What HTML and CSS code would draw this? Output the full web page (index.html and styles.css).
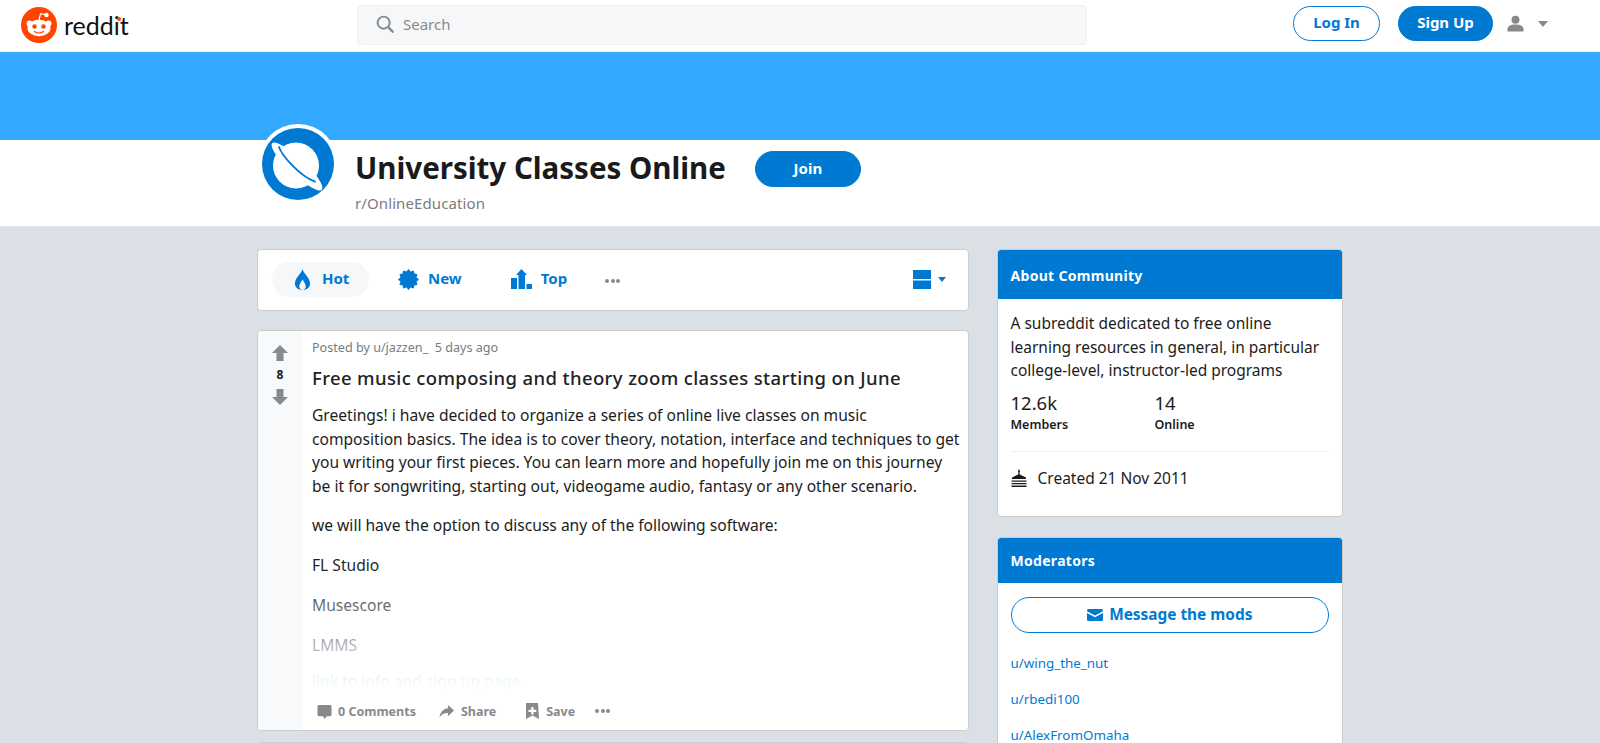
FILE: index.html
```html
<!DOCTYPE html>
<html lang="en">
<head>
  <meta charset="UTF-8">
  <title>University Classes Online</title>
  <link rel="stylesheet" href="styles.css">
</head>
<body>
  <header class="topbar">
    <a class="logo">
      <svg class="logo-icon" viewBox="0 0 36 36">
        <circle cx="18" cy="18" r="18" fill="#ff4500"/>
        <path d="M18 13l1.6-6.4 4.6 1" fill="none" stroke="#fff" stroke-width="1.2"/>
        <circle cx="25.5" cy="8" r="2.2" fill="#fff"/>
        <circle cx="8.5" cy="16.5" r="3" fill="#fff"/>
        <circle cx="27.5" cy="16.5" r="3" fill="#fff"/>
        <ellipse cx="18" cy="21" rx="11.5" ry="8.2" fill="#fff"/>
        <circle cx="13.5" cy="19.5" r="2.2" fill="#ff4500"/>
        <circle cx="22.5" cy="19.5" r="2.2" fill="#ff4500"/>
        <path d="M13.5 24.5c2.5 2 6.5 2 9 0" fill="none" stroke="#ff4500" stroke-width="1.2" stroke-linecap="round"/>
      </svg>
      <span class="logo-text">reddit<i class="logo-dot"></i></span>
    </a>
    <div class="search">
      <svg class="search-icon" viewBox="0 0 20 20">
        <circle cx="8.5" cy="8.5" r="6.7" fill="none" stroke="#878a8c" stroke-width="2.2"/>
        <path d="M13.5 13.5l5 5" stroke="#878a8c" stroke-width="2.6" stroke-linecap="round"/>
      </svg>
      <span>Search</span>
    </div>
    <div class="auth">
      <button class="btn btn-outline btn-login">Log In</button>
      <button class="btn btn-solid btn-signup">Sign Up</button>
      <svg class="user-icon" viewBox="0 0 18 18">
        <circle cx="9" cy="5" r="4.2" fill="#878a8c"/>
        <path d="M0.5 17.5V15c0-3 3-5 8.5-5s8.5 2 8.5 5v2.5z" fill="#878a8c"/>
      </svg>
      <span class="caret caret-grey"></span>
    </div>
  </header>

  <div class="banner"></div>

  <section class="sub-head">
    <div class="sub-head-inner">
      <svg class="sub-icon" viewBox="0 0 80 80">
        <circle cx="40" cy="40" r="40" fill="#fff"/>
        <circle cx="40" cy="40" r="36" fill="#0079d3"/>
        <circle cx="38" cy="41.5" r="23" fill="#fff"/>
        <ellipse cx="39" cy="42.5" rx="34" ry="8" transform="rotate(43 39 42.5)" fill="#fff"/>
        <path d="M21 23C24 32 42 52 57 57.7" fill="none" stroke="#0079d3" stroke-width="1.8" stroke-linecap="round"/>
      </svg>
      <div class="sub-names">
        <div class="sub-title-row">
          <h1 class="sub-title">University Classes Online</h1>
          <button class="btn btn-solid btn-join">Join</button>
        </div>
        <div class="sub-slug">r/OnlineEducation</div>
      </div>
    </div>
  </section>

  <main class="content">
    <div class="feed">
      <div class="sort-bar">
        <a class="sort-item sort-active">
          <svg class="sort-icon" viewBox="0 0 18 22"><path fill-rule="evenodd" d="M9 0C10 5 17 9 17 15.5 17 19.5 13.5 22 9 22S1 19.5 1 15.5C1 9 8 5 9 0zM9 11C7 14 5.5 16.5 5.5 18.5 5.5 20 7 22 9 22s3.5-2 3.5-3.5C12.5 16.5 11 14 9 11z" fill="#0079d3"/></svg>
          <span>Hot</span>
        </a>
        <a class="sort-item sort-new">
          <svg class="sort-icon sort-icon-new" viewBox="0 0 24 24"><path d="M12 0L14.46 2.82 18 1.6 18.72 5.28 22.39 6 21.18 9.54 24 12 21.18 14.46 22.39 18 18.72 18.72 18 22.39 14.46 21.18 12 24 9.54 21.18 6 22.39 5.28 18.72 1.61 18 2.82 14.46 0 12 2.82 9.54 1.61 6 5.28 5.28 6 1.61 9.54 2.82z" fill="#0079d3"/></svg>
          <span>New</span>
        </a>
        <a class="sort-item sort-top">
          <svg class="sort-icon sort-icon-top" viewBox="0 0 21 20"><path d="M0 9h6v11H0zM7.5 6H5l5.5-6L16 6h-2v14H7.5zM15.5 15H21v5h-5.5z" fill="#0079d3"/></svg>
          <span>Top</span>
        </a>
        <span class="dots sort-dots"><i></i><i></i><i></i></span>
        <div class="view-switch">
          <svg class="view-icon" viewBox="0 0 18 19"><path d="M0 0h18v9H0zM0 10.5h18V19H0z" fill="#0079d3"/></svg>
          <span class="caret caret-blue"></span>
        </div>
      </div>

      <article class="post">
        <div class="votes">
          <svg class="vote-arrow" viewBox="0 0 16 16"><path d="M8 0l8 8h-4.5v8h-7V8H0z" fill="#878a8c"/></svg>
          <span class="vote-count">8</span>
          <svg class="vote-arrow" viewBox="0 0 16 16"><path d="M8 16L0 8h4.5V0h7v8H16z" fill="#878a8c"/></svg>
        </div>
        <div class="post-main">
          <div class="post-meta">Posted by u/jazzen_ &nbsp;5 days ago</div>
          <h2 class="post-title">Free music composing and theory zoom classes starting on June</h2>
          <div class="post-body">
            <p>Greetings! i have decided to organize a series of online live classes on music<br>composition basics. The idea is to cover theory, notation, interface and techniques to get<br>you writing your first pieces. You can learn more and hopefully join me on this journey<br>be it for songwriting, starting out, videogame audio, fantasy or any other scenario.</p>
            <p>we will have the option to discuss any of the following software:</p>
            <p>FL Studio</p>
            <p>Musescore</p>
            <p>LMMS</p>
            <p class="post-link">link to info and sign up page</p>
          </div>
          <div class="post-actions">
            <a class="action action-comments">
              <svg class="action-icon" viewBox="0 0 16 16"><path d="M2 1h12a1.5 1.5 0 0 1 1.5 1.5v9A1.5 1.5 0 0 1 14 13h-3.5L8 16l-1.5-3H2a1.5 1.5 0 0 1-1.5-1.5v-9A1.5 1.5 0 0 1 2 1z" fill="#878a8c"/></svg>
              0 Comments
            </a>
            <a class="action action-share">
              <svg class="action-icon" viewBox="0 0 16 16"><path d="M9.5 1L16 7l-6.5 6V9.5C5 9.5 2.5 11 .5 15 1 9.5 4 5 9.5 4.5z" fill="#878a8c"/></svg>
              Share
            </a>
            <a class="action action-save">
              <svg class="action-icon action-icon-save" viewBox="0 0 13 16"><path fill-rule="evenodd" d="M0 0h12l1 16-6.5-3.5L0 16zM5.3 4v2.7H2.5v2.2h2.8v2.7h2.2V8.9h2.8V6.7H7.5V4z" fill="#878a8c"/></svg>
              Save
            </a>
            <span class="dots action-dots"><i></i><i></i><i></i></span>
          </div>
        </div>
      </article>

      <div class="post-next"></div>
    </div>

    <aside class="sidebar">
      <section class="card">
        <h3 class="card-head">About Community</h3>
        <div class="card-body about-body">
          <p class="about-text">A subreddit dedicated to free online learning resources in general, in particular college-level, instructor-led programs</p>
          <div class="stats">
            <div class="stat">
              <div class="stat-num">12.6k</div>
              <div class="stat-label">Members</div>
            </div>
            <div class="stat">
              <div class="stat-num">14</div>
              <div class="stat-label">Online</div>
            </div>
          </div>
          <div class="created">
            <svg class="cake-icon" viewBox="0 0 16 18">
              <path d="M8 0l1 2.2c0 .7-.4 1.1-1 1.1s-1-.4-1-1.1z" fill="#1c1c1c"/>
              <path d="M7.3 3.3h1.4v2H7.3z" fill="#1c1c1c"/>
              <path d="M8 5l7 3.5V10H1V8.5zM.5 11.5h15v1.2H.5zM.5 14h15v1.2H.5zM.5 16.5h15V18H.5z" fill="#1c1c1c"/>
            </svg>
            Created 21 Nov 2011
          </div>
        </div>
      </section>

      <section class="card">
        <h3 class="card-head card-head-mods">Moderators</h3>
        <div class="card-body mods-body">
          <button class="btn btn-outline btn-message">
            <svg class="mail-icon" viewBox="0 0 16 12"><path d="M1.5 0h13A1.5 1.5 0 0 1 16 1.5v.7L8 6.5 0 2.2v-.7A1.5 1.5 0 0 1 1.5 0zM0 4l8 4.3L16 4v6.5a1.5 1.5 0 0 1-1.5 1.5h-13A1.5 1.5 0 0 1 0 10.5z" fill="#0079d3"/></svg>
            Message the mods
          </button>
          <ul class="mods">
            <li>u/wing_the_nut</li>
            <li>u/rbedi100</li>
            <li>u/AlexFromOmaha</li>
          </ul>
        </div>
      </section>
    </aside>
  </main>
</body>
</html>
```

FILE: styles.css
```css
* {
  box-sizing: border-box;
}
html,
body {
  height: 743px;
  overflow: hidden;
}
body {
  margin: 0;
  background: #dae0e6;
  color: #1c1c1c;
  font-family: "Noto Sans", sans-serif;
}
h1, h2, h3, p, ul {
  margin: 0;
  padding: 0;
}

.topbar {
  display: flex;
  align-items: center;
  height: 52px;
  padding: 0 20px 2px 21px;
  background: white;
  border-bottom: 1px solid #edeff1;
}
.logo {
  display: flex;
  align-items: center;
  gap: 7px;
  width: 336px;
}
.logo-icon {
  width: 36px;
  height: 36px;
}
.logo-text {
  position: relative;
  font-family: "Lato", sans-serif;
  font-size: 25px;
  color: #111;
}
.logo-dot {
  position: absolute;
  right: 8px;
  top: 7px;
  width: 4px;
  height: 4px;
  border-radius: 50%;
  background: #ff4500;
}
.search {
  display: flex;
  align-items: center;
  gap: 9px;
  width: 730px;
  height: 40px;
  padding: 0 0 2px 18px;
  background: #f6f7f8;
  border: 1px solid #edeff1;
  border-radius: 4px;
  color: #878a8c;
  font-size: 15px;
}
.search-icon {
  width: 18px;
  height: 18px;
}
.auth {
  display: flex;
  align-items: center;
  margin-left: auto;
  margin-bottom: 2px;
}
.user-icon {
  width: 17px;
  height: 17px;
  margin: 0 14px 0 14px;
}

.btn {
  display: inline-flex;
  align-items: center;
  justify-content: center;
  border-radius: 18px;
  font-family: inherit;
  font-size: 14px;
  font-weight: 700;
  padding: 0 0 3px;
}
.btn-solid {
  background: #0079d3;
  color: white;
  border: 1px solid #0079d3;
}
.btn-outline {
  background: white;
  color: #0079d3;
  border: 1px solid #0079d3;
}
.btn-login {
  width: 87px;
  height: 35px;
  margin-right: 18px;
  font-size: 15px;
}
.btn-signup {
  width: 95px;
  height: 35px;
  font-size: 15px;
}
.btn-join {
  width: 106px;
  height: 36px;
  margin: 2px 0 0 29px;
  padding-bottom: 2px;
  font-size: 15px;
}
.btn-message {
  gap: 6px;
  width: 100%;
  height: 36px;
  padding-bottom: 1px;
  font-size: 15.4px;
}

.caret {
  width: 0;
  height: 0;
  border-left: 5px solid transparent;
  border-right: 5px solid transparent;
}
.caret-grey {
  border-top: 6px solid #878a8c;
  margin-right: 32px;
}
.caret-blue {
  border-left-width: 4px;
  border-right-width: 4px;
  border-top: 5px solid #0079d3;
}

.banner {
  height: 88px;
  background: #33a8ff;
}
.sub-head {
  height: 87px;
  background: white;
  border-bottom: 1px solid #e4e8ec;
}
.sub-head-inner {
  display: flex;
  gap: 17px;
  padding-left: 258px;
}
.sub-icon {
  width: 80px;
  height: 80px;
  margin-top: -16px;
}
.sub-names {
  padding-top: 9px;
}
.sub-title-row {
  display: flex;
  align-items: center;
  height: 38px;
}
.sub-title {
  font-size: 29.5px;
  font-weight: 700;
  line-height: 38px;
  color: #1a1a1b;
}
.sub-slug {
  margin-top: 7px;
  font-size: 15px;
  letter-spacing: 0.1px;
  line-height: 18px;
  color: #7c7c7c;
}

.content {
  display: flex;
  align-items: flex-start;
  gap: 28px;
  padding: 22px 0 0 257px;
}
.feed {
  width: 712px;
}
.sort-bar {
  display: flex;
  align-items: center;
  height: 62px;
  padding: 0 22px 2px 14px;
  background: white;
  border: 1px solid #ccc;
  border-radius: 4px;
}
.sort-item {
  display: flex;
  align-items: center;
  color: #0079d3;
  font-size: 15px;
  font-weight: 700;
}
.sort-item span {
  padding-bottom: 3px;
}
.sort-active {
  gap: 11px;
  width: 97px;
  height: 35px;
  margin-top: 1px;
  padding-left: 22px;
  background: #f6f7f8;
  border-radius: 18px;
}
.sort-new {
  gap: 9px;
  margin-left: 29px;
}
.sort-top {
  gap: 9px;
  margin-left: 49px;
}
.sort-icon {
  width: 17px;
  height: 21px;
}
.sort-icon-new {
  width: 21px;
  height: 21px;
}
.sort-icon-top {
  width: 21px;
  height: 20px;
}
.dots {
  display: inline-flex;
  gap: 1.5px;
}
.dots i {
  width: 4px;
  height: 4px;
  border-radius: 50%;
  background: #878a8c;
}
.sort-dots {
  margin: 4px 0 0 38px;
}
.view-switch {
  display: flex;
  align-items: center;
  gap: 7px;
  margin-left: auto;
}
.view-icon {
  width: 18px;
  height: 19px;
}

.post {
  display: flex;
  height: 401px;
  margin-top: 19px;
  overflow: hidden;
  background: white;
  border: 1px solid #ccc;
  border-radius: 4px;
}
.votes {
  display: flex;
  flex-direction: column;
  align-items: center;
  width: 44px;
  padding-top: 14px;
  background: #f8f9fa;
}
.vote-arrow {
  width: 16px;
  height: 16px;
}
.vote-count {
  margin: 5px 0;
  font-size: 12px;
  font-weight: 700;
  line-height: 18px;
}
.post-main {
  flex: 1;
  padding: 9px 8px 0 10px;
}
.post-meta {
  font-size: 12.6px;
  line-height: 16px;
  color: #787c7e;
}
.post-title {
  margin-top: 10px;
  font-size: 18.5px;
  font-weight: 500;
  letter-spacing: 0.37px;
  line-height: 24px;
  color: #222;
}
.post-body {
  position: relative;
  height: 289px;
  margin-top: 14px;
  overflow: hidden;
  font-size: 15.6px;
  line-height: 23.5px;
  color: #1c1c1c;
}
.post-body p {
  margin-bottom: 16.3px;
}
.post-body::after {
  content: "";
  position: absolute;
  left: 0;
  right: 0;
  bottom: 0;
  height: 130px;
  background: linear-gradient(rgba(255,255,255,0), white 97%);
}
.post-body .post-link {
  margin: 3px 0 0;
  line-height: 17px;
  color: #0079d3;
}
.post-actions {
  display: flex;
  align-items: center;
  height: 36px;
  padding-left: 5px;
  color: #878a8c;
  font-size: 12.5px;
  font-weight: 700;
}
.action {
  display: flex;
  align-items: center;
  gap: 6px;
}
.action-comments {
  margin-right: 23px;
}
.action-share {
  margin-right: 30px;
}
.action-share .action-icon {
  margin-right: 1px;
}
.action-save {
  gap: 7px;
  margin-right: 20px;
}
.action-icon {
  width: 15px;
  height: 15px;
}
.action-icon-save {
  width: 13px;
  height: 16px;
}
.post-next {
  height: 40px;
  margin-top: 11px;
  background: white;
  border: 1px solid #ccc;
  border-radius: 4px;
}

.sidebar {
  width: 346px;
}
.card {
  margin-bottom: 20px;
  overflow: hidden;
  background: white;
  border: 1px solid #ccc;
  border-radius: 4px;
}
.card-head {
  height: 49px;
  padding: 2px 12.5px 0;
  font-size: 14px;
  font-weight: 700;
  line-height: 47px;
  letter-spacing: 0.3px;
  background: #0079d3;
  color: white;
}
.card-head-mods {
  height: 45px;
  padding-top: 1px;
  line-height: 44px;
}
.card-body {
  padding: 13px 13px 13px 12.5px;
}
.about-body {
  height: 217px;
}
.mods-body {
  padding-top: 14px;
}
.about-text {
  font-size: 15.5px;
  line-height: 23.5px;
}
.stats {
  display: flex;
  margin-top: 8px;
  padding-bottom: 16px;
  border-bottom: 1px solid #edeff1;
}
.stat {
  width: 144px;
}
.stat-num {
  font-size: 18.5px;
  line-height: 24px;
}
.stat-label {
  font-size: 12.5px;
  font-weight: 600;
  line-height: 20px;
}
.created {
  display: flex;
  align-items: center;
  gap: 11px;
  margin-top: 14px;
  font-size: 15.5px;
  line-height: 24px;
}
.cake-icon {
  width: 16px;
  height: 18px;
}
.mail-icon {
  width: 16px;
  height: 12px;
}
.mods {
  margin-top: 21px;
  list-style: none;
  color: #0079d3;
  font-size: 13.4px;
  line-height: 18px;
}
.mods li {
  margin-bottom: 18px;
}
```
